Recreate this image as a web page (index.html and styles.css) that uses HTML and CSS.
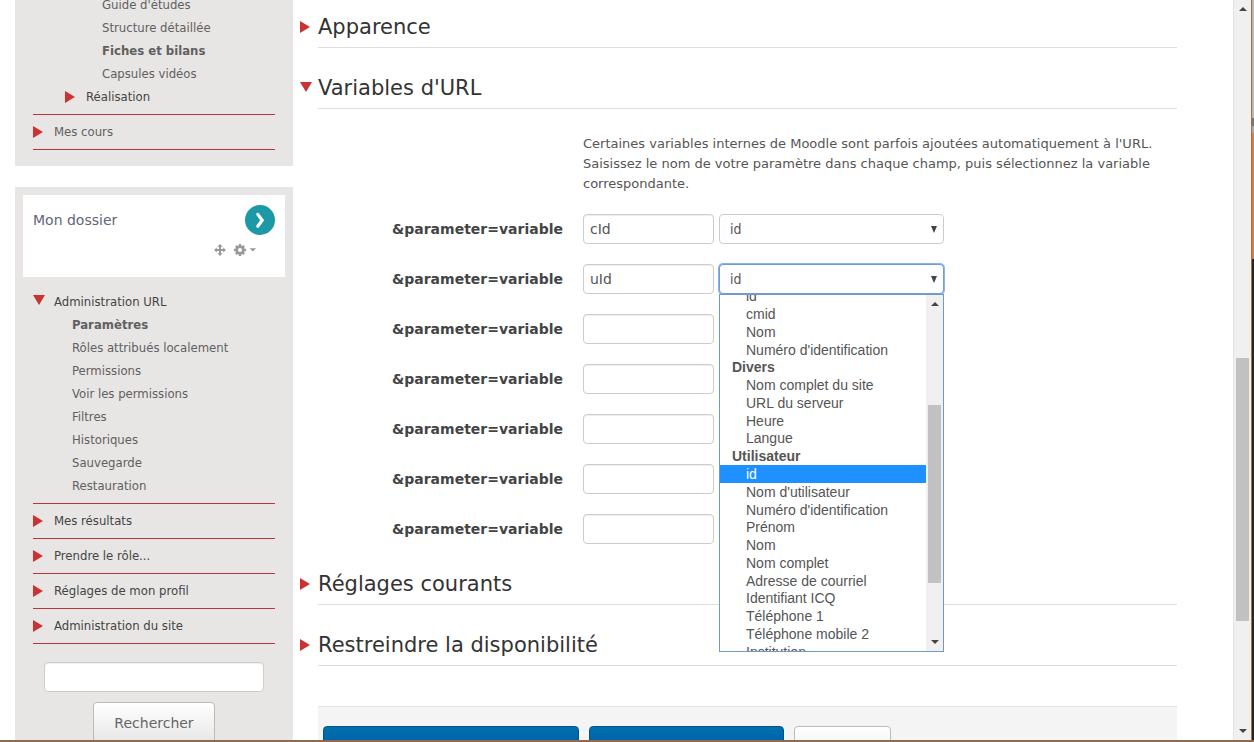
FILE: index.html
```html
<!DOCTYPE html>
<html lang="fr">
<head>
  <meta charset="UTF-8">
  <meta name="viewport" content="width=device-width, initial-scale=1.0">
  <title>Paramètres URL</title>
  <link rel="stylesheet" href="styles.css">
</head>
<body>
  <div class="window">
    <div class="page">
      <aside class="sidebar">
        <nav class="block block-nav">
          <ul class="tree">
            <li class="branch">
              <ul class="leaves deep">
                <li><a href="#">Guide d'études</a></li>
                <li><a href="#">Structure détaillée</a></li>
                <li><a href="#" class="current">Fiches et bilans</a></li>
                <li><a href="#">Capsules vidéos</a></li>
              </ul>
              <p class="node closed nested">Réalisation</p>
            </li>
            <li class="branch"><a href="#" class="node closed">Mes cours</a></li>
          </ul>
        </nav>

        <section class="block block-admin">
          <header class="block-header">
            <div class="block-title">
              <h2>Mon dossier</h2>
              <button type="button" class="round" aria-label="Ouvrir">
                <svg width="30" height="30" viewBox="0 0 30 30">
                  <circle cx="15" cy="15" r="15" fill="#1d98a6"/>
                  <path d="M12.8 9.4l4.4 5.9-4.4 5.9" fill="none" stroke="#fff" stroke-width="3.2" stroke-linecap="round"/>
                </svg>
              </button>
            </div>
            <div class="block-tools">
              <button type="button" aria-label="Déplacer">
                <svg width="12" height="12" viewBox="0 0 12 12" fill="#999">
                  <path d="M6 0l2.6 2.8H7V5h2.2V3.4L12 6 9.2 8.6V7H7v2.2h1.6L6 12 3.4 9.2H5V7H2.8v1.6L0 6l2.8-2.6V5H5V2.8H3.4z"/>
                </svg>
              </button>
              <button type="button" aria-label="Actions">
                <svg width="23" height="12" viewBox="0 0 23 12">
                  <circle cx="6" cy="6" r="3.3" fill="none" stroke="#999" stroke-width="2.6"/>
                  <path d="M6 0v2.4M6 9.6V12M0 6h2.4M9.6 6H12M1.8 1.8l1.6 1.6M8.6 8.6l1.6 1.6M10.2 1.8L8.6 3.4M3.4 8.6l-1.6 1.6" stroke="#999" stroke-width="2.4"/>
                  <path d="M15.5 4.3h6.6l-3.3 3.3z" fill="#999"/>
                </svg>
              </button>
            </div>
          </header>
          <ul class="tree">
            <li class="branch">
              <p class="node open">Administration URL</p>
              <ul class="leaves">
                <li><a href="#" class="current">Paramètres</a></li>
                <li><a href="#">Rôles attribués localement</a></li>
                <li><a href="#">Permissions</a></li>
                <li><a href="#">Voir les permissions</a></li>
                <li><a href="#">Filtres</a></li>
                <li><a href="#">Historiques</a></li>
                <li><a href="#">Sauvegarde</a></li>
                <li><a href="#">Restauration</a></li>
              </ul>
            </li>
            <li class="branch"><p class="node closed">Mes résultats</p></li>
            <li class="branch"><p class="node closed">Prendre le rôle...</p></li>
            <li class="branch"><p class="node closed">Réglages de mon profil</p></li>
            <li class="branch"><p class="node closed">Administration du site</p></li>
          </ul>
          <form class="search">
            <input type="text" class="field" aria-label="Rechercher dans les réglages">
            <button type="button" class="btn">Rechercher</button>
          </form>
        </section>
      </aside>

      <main class="content">
        <form>
          <h3 class="legend closed"><a href="#">Apparence</a></h3>
          <h3 class="legend open"><a href="#">Variables d'URL</a></h3>
          <div class="variables">
            <p class="help">Certaines variables internes de Moodle sont parfois ajoutées automatiquement à l'URL. Saisissez le nom de votre paramètre dans chaque champ, puis sélectionnez la variable correspondante.</p>
            <div class="row">
              <label for="param0">&amp;parameter=variable</label>
              <div class="controls">
                <input type="text" class="field" id="param0" value="cId">
                <div class="picker">
                  <select aria-label="Variable 1"><option>id</option></select>
                </div>
              </div>
            </div>
            <div class="row">
              <label for="param1">&amp;parameter=variable</label>
              <div class="controls">
                <input type="text" class="field" id="param1" value="uId">
                <div class="picker active">
                  <select aria-label="Variable 2"><option>id</option></select>
                  <div class="popup">
                    <ul class="options" role="listbox" aria-label="Variables">
                      <li role="option">id</li>
                      <li role="option">cmid</li>
                      <li role="option">Nom</li>
                      <li role="option">Numéro d'identification</li>
                      <li class="group">Divers</li>
                      <li role="option">Nom complet du site</li>
                      <li role="option">URL du serveur</li>
                      <li role="option">Heure</li>
                      <li role="option">Langue</li>
                      <li class="group">Utilisateur</li>
                      <li role="option" aria-selected="true" class="selected">id</li>
                      <li role="option">Nom d'utilisateur</li>
                      <li role="option">Numéro d'identification</li>
                      <li role="option">Prénom</li>
                      <li role="option">Nom</li>
                      <li role="option">Nom complet</li>
                      <li role="option">Adresse de courriel</li>
                      <li role="option">Identifiant ICQ</li>
                      <li role="option">Téléphone 1</li>
                      <li role="option">Téléphone mobile 2</li>
                      <li role="option">Institution</li>
                    </ul>
                    <div class="scrollbar popup-scroll">
                      <span class="arrow up"></span>
                      <span class="thumb"></span>
                      <span class="arrow down"></span>
                    </div>
                  </div>
                </div>
              </div>
            </div>
            <div class="row">
              <label for="param2">&amp;parameter=variable</label>
              <div class="controls"><input type="text" class="field" id="param2"></div>
            </div>
            <div class="row">
              <label for="param3">&amp;parameter=variable</label>
              <div class="controls"><input type="text" class="field" id="param3"></div>
            </div>
            <div class="row">
              <label for="param4">&amp;parameter=variable</label>
              <div class="controls"><input type="text" class="field" id="param4"></div>
            </div>
            <div class="row">
              <label for="param5">&amp;parameter=variable</label>
              <div class="controls"><input type="text" class="field" id="param5"></div>
            </div>
            <div class="row">
              <label for="param6">&amp;parameter=variable</label>
              <div class="controls"><input type="text" class="field" id="param6"></div>
            </div>
          </div>
          <h3 class="legend closed"><a href="#">Réglages courants</a></h3>
          <h3 class="legend closed"><a href="#">Restreindre la disponibilité</a></h3>
          <div class="actions">
            <button type="button" class="btn primary">Enregistrer et revenir au cours</button>
            <button type="button" class="btn primary">Enregistrer et afficher</button>
            <button type="button" class="btn">Annuler</button>
          </div>
        </form>
      </main>
    </div>
    <div class="scrollbar page-scroll">
      <span class="arrow up"></span>
      <span class="thumb"></span>
      <span class="arrow down"></span>
    </div>
    <div class="edge"></div>
  </div>
</body>
</html>
```

FILE: styles.css
```css
:root {
  --red: #cb3234;
  --line: #b5373b;
  --panel: #e8e6e5;
  --text: #555;
  --border: #ccc;
  --narrow: "DejaVu Sans Condensed", Tahoma, sans-serif;
  --wide: "DejaVu Sans", Verdana, sans-serif;
}

* {
  box-sizing: border-box;
}

body {
  margin: 0;
  font-family: var(--narrow);
  font-size: 13px;
  color: var(--text);
  background: #fff;
}

ul {
  list-style: none;
  margin: 0;
  padding: 0;
}

p,
h2,
h3 {
  margin: 0;
  font-weight: normal;
}

a {
  color: inherit;
  text-decoration: none;
}

.window {
  display: flex;
  height: 100vh;
  overflow: hidden;
  border-bottom: 2px solid #8f6a52;
}

/* content is scrolled a little past the first row */
.page {
  flex: 1;
  display: flex;
  align-items: flex-start;
  margin-top: -7px;
  padding: 0 56px 0 15px;
}

/* Sidebar */
.sidebar {
  flex: 0 0 278px;
}

.block {
  background: var(--panel);
  padding: 8px;
}

.block-nav {
  padding-top: 0;
  padding-bottom: 16px;
  margin-bottom: 21px;
}

.block-header {
  height: 82px;
  padding: 10px;
  margin-bottom: 8px;
  background: #fff;
}

.block-title {
  display: flex;
  justify-content: space-between;
  align-items: center;
  height: 30px;
}

.block-title h2 {
  font-family: var(--wide);
  font-size: 14px;
  color: #5f6478;
}

.block-header button {
  display: flex;
  padding: 0;
  border: 0;
  background: none;
}

.block-tools {
  display: flex;
  justify-content: flex-end;
  gap: 8px;
  padding: 9px 18px 0 0;
}

.tree {
  padding: 0 10px;
  line-height: 23px;
}

.branch {
  padding: 5px 0 6px;
  border-bottom: 1px solid var(--line);
}

.block-nav .branch:first-child {
  padding-top: 0;
}

.node {
  display: flex;
  align-items: center;
  color: #444;
}

a.node {
  color: #606060;
}

.nested {
  padding-left: 32px;
}

.leaves {
  padding-left: 39px;
  color: #606060;
}

.deep {
  padding-left: 69px;
}

.current {
  font-weight: bold;
}

.closed::before {
  content: "";
  border-left: 10px solid var(--red);
  border-top: 6px solid transparent;
  border-bottom: 6px solid transparent;
}

.open::before {
  content: "";
  border-top: 10px solid var(--red);
  border-left: 6px solid transparent;
  border-right: 6px solid transparent;
}

.node::before {
  margin-right: 11px;
}

.node.open::before {
  margin-right: 9px;
  margin-bottom: 3px;
}

.search {
  display: flex;
  flex-direction: column;
  align-items: center;
  gap: 10px;
  padding-top: 18px;
}

.search .field {
  width: 220px;
}

/* Form controls */
.field,
select {
  height: 30px;
  border: 1px solid var(--border);
  border-radius: 4px;
  background: #fff;
  font-family: var(--narrow);
  font-size: 14px;
  color: var(--text);
}

.field {
  padding: 0 6px;
  font-family: var(--wide);
  box-shadow: inset 0 1px 1px rgba(0, 0, 0, 0.07);
}

.btn {
  height: 42px;
  padding: 0 20px;
  border: 1px solid #bbb;
  border-radius: 4px;
  background: linear-gradient(#fff, #e6e6e6);
  font-family: var(--wide);
  font-size: 14px;
  line-height: 20px;
  color: #666;
}

.btn.primary {
  border-color: #00528c;
  background: linear-gradient(#0070b0, #0050a0);
  color: #fff;
}

/* Main form */
.content {
  flex: 1;
  padding: 14px 0 0 25px;
}

.legend {
  position: relative;
  height: 41px;
  margin-bottom: 20px;
  border-bottom: 1px solid #ddd;
  font-family: var(--wide);
  font-size: 21px;
  line-height: 40px;
  color: #333;
}

.legend::before {
  position: absolute;
  left: -18px;
  top: 14px;
}

.variables {
  padding-top: 5px;
}

.help {
  margin: 0 0 20px 265px;
  font-family: var(--wide);
  line-height: 20px;
}

.row {
  display: grid;
  grid-template-columns: 245px 1fr;
  gap: 20px;
  align-items: center;
  margin-bottom: 20px;
}

.row label {
  font-family: var(--wide);
  font-size: 14px;
  font-weight: bold;
  text-align: right;
  color: #444;
}

.controls {
  display: flex;
  gap: 5px;
}

.controls .field {
  width: 131px;
}

.picker {
  position: relative;
  width: 225px;
}

.picker::after {
  content: "";
  position: absolute;
  right: 7px;
  top: 12px;
  border-top: 7px solid #444;
  border-left: 3px solid transparent;
  border-right: 3px solid transparent;
}

select {
  display: block;
  width: 100%;
  padding: 0 10px;
  appearance: none;
}

.active select {
  border-color: #6f9be0;
  box-shadow: 0 0 0 1px #8fb2ec;
}

.popup {
  position: absolute;
  top: 30px;
  left: 0;
  z-index: 1;
  display: flex;
  align-items: center;
  width: 100%;
  height: 358px;
  overflow: hidden;
  border: 1px solid #7398c4;
  background: #fff;
}

.options {
  flex: 1;
  display: grid;
  grid-auto-rows: 1fr;
  height: 373px;
  margin-top: 2px;
  font-family: "Liberation Sans", Arial, sans-serif;
  font-size: 14px;
}

.options li {
  display: flex;
  align-items: center;
  padding-left: 26px;
}

.options .group {
  padding-left: 12px;
  font-weight: bold;
}

.options .selected {
  background: #1e90ff;
  color: #fff;
}

.actions {
  display: flex;
  gap: 10px;
  margin-top: 40px;
  padding: 19px 5px;
  border-top: 1px solid #e3e3e3;
  background: #f4f4f4;
}

.actions .btn {
  min-width: 97px;
}

/* Scrollbars */
.scrollbar {
  display: flex;
  flex-direction: column;
  align-items: center;
  align-self: stretch;
  background: #f0f0f0;
}

.thumb {
  width: 13px;
  background: #c1c1c1;
}

.arrow {
  border-left: 4px solid transparent;
  border-right: 4px solid transparent;
}

.up {
  margin-top: 7px;
  border-bottom: 4px solid #444;
}

.down {
  margin-top: auto;
  margin-bottom: 7px;
  border-top: 4px solid #444;
}

.popup-scroll {
  width: 17px;
}

.popup-scroll .thumb {
  height: 50%;
  margin-top: 99px;
}

.page-scroll {
  width: 18px;
  border-left: 1px solid #e4e4e4;
}

.page-scroll .thumb {
  height: 263px;
  margin-top: 347px;
}

/* strip of desktop behind the window */
.edge {
  width: 3px;
  border-left: 1px solid #a5713f;
  background: linear-gradient(#bdb9b4 16%, #777 16% 17%, #aaa 17% 18%, #dd7a3d 18% 35%, #25252a 35%);
}
```
